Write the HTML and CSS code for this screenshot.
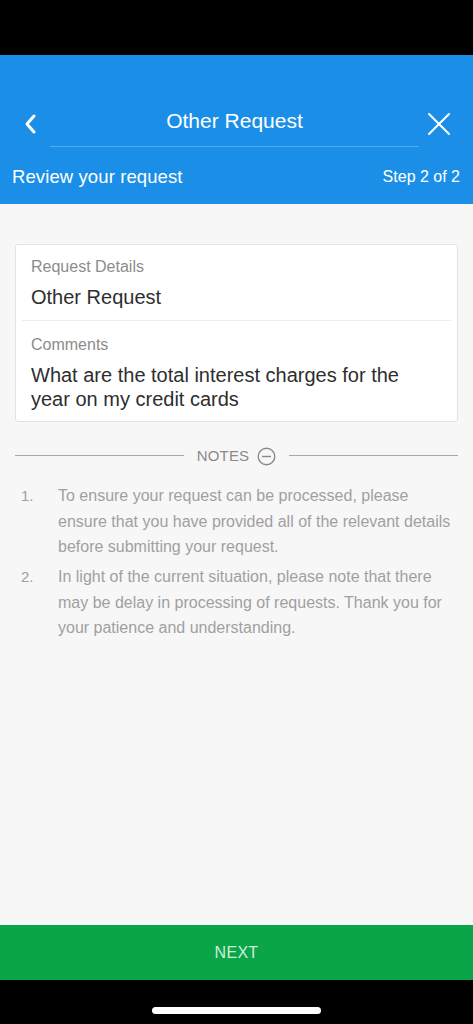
FILE: index.html
```html
<!DOCTYPE html>
<html lang="en">
<head>
    <meta charset="UTF-8">
    <meta name="viewport" content="width=device-width, initial-scale=1.0">
    <title>Other Request</title>
    <link rel="stylesheet" href="styles.css">
</head>
<body>
    <div class="screen">
        <div class="status-bar"></div>

        <!-- Blue header with nav and step info -->
        <header class="header">
            <div class="nav">
                <button class="nav-btn" aria-label="Back">
                    <svg width="16" height="24" viewBox="0 0 16 24"><path d="M12 4 L5 12 L12 20" fill="none" stroke="#fff" stroke-width="3" stroke-linecap="round" stroke-linejoin="round"/></svg>
                </button>
                <h1 class="title">Other Request</h1>
                <button class="nav-btn" aria-label="Close">
                    <svg width="24" height="24" viewBox="0 0 24 24"><path d="M2 2 L22 22 M22 2 L2 22" fill="none" stroke="#fff" stroke-width="2" stroke-linecap="round"/></svg>
                </button>
            </div>
            <div class="step-row">
                <span>Review your request</span>
                <span class="step">Step 2 of 2</span>
            </div>
        </header>

        <main class="content">
            <div class="card">
                <div class="field">
                    <div class="label">Request Details</div>
                    <div class="value">Other Request</div>
                </div>
                <div class="field">
                    <div class="label">Comments</div>
                    <div class="value">What are the total interest charges for the year on my credit cards</div>
                </div>
            </div>

            <div class="notes-head">
                <span class="rule"></span>
                <span class="notes-title">NOTES</span>
                <svg class="notes-icon" width="19" height="19" viewBox="0 0 19 19"><circle cx="9.5" cy="9.5" r="8.3" fill="none" stroke="#8a8a8a" stroke-width="1.4"/><path d="M5 9.5 H14" stroke="#8a8a8a" stroke-width="1.4"/></svg>
                <span class="rule"></span>
            </div>

            <ol class="notes">
                <li><span class="num">1.</span><p>To ensure your request can be processed, please ensure that you have provided all of the relevant details before submitting your request.</p></li>
                <li><span class="num">2.</span><p>In light of the current situation, please note that there may be delay in processing of requests. Thank you for your patience and understanding.</p></li>
            </ol>
        </main>

        <button class="next-btn">NEXT</button>
        <div class="home-bar"><span class="home-indicator"></span></div>
    </div>
</body>
</html>
```

FILE: styles.css
```css
* {
    box-sizing: border-box;
}
body {
    margin: 0;
    padding: 0;
    font-family: 'Liberation Sans', Arial, sans-serif;
    background-color: #000;
}
.screen {
    width: 473px;
    height: 1024px;
    display: flex;
    flex-direction: column;
    background-color: #f8f7f8;
}
.status-bar {
    height: 55px;
    background-color: #000;
}
.header {
    background-color: #1b8fe8;
    color: #fff;
    height: 149px;
    padding-top: 49px;
}
.nav {
    display: flex;
    align-items: center;
    justify-content: space-between;
    padding: 0 22px 0 18px;
    height: 40px;
}
.nav-btn {
    background: none;
    border: none;
    padding: 0;
    width: 24px;
    height: 24px;
    display: flex;
    align-items: center;
    justify-content: center;
}
.title {
    flex: 1;
    margin: 0 8px 0 8px;
    text-align: center;
    font-size: 21px;
    font-weight: normal;
    height: 46px;
    line-height: 40px;
    border-bottom: 1px solid rgba(255, 255, 255, 0.25);
}
.step-row {
    display: flex;
    justify-content: space-between;
    align-items: center;
    padding: 0 13px 0 12px;
    margin-top: 22px;
    font-size: 18.5px;
    letter-spacing: 0.1px;
}
.step {
    font-size: 16px;
    letter-spacing: 0;
}
.content {
    flex: 1;
    padding: 40px 15px 0;
}
.card {
    background: #fff;
    border: 1px solid #e2e2e2;
    border-radius: 3px;
    padding: 0 6px;
}
.field {
    padding: 13px 40px 11px 9px;
}
.field + .field {
    border-top: 1px solid #ececec;
    padding-top: 15px;
    padding-bottom: 10px;
}
.label {
    font-size: 16px;
    line-height: 18px;
    color: #8c8c8c;
    margin-bottom: 9px;
}
.value {
    font-size: 20px;
    color: #2e2e2e;
    line-height: 24px;
}
.notes-head {
    display: flex;
    align-items: center;
    margin-top: 23px;
    color: #8a8a8a;
}
.rule {
    flex: 1;
    height: 1px;
    background-color: #a8a8a8;
}
.notes-title {
    font-size: 15px;
    margin: 0 8px 0 13px;
    letter-spacing: 0.2px;
}
.notes-icon {
    margin-right: 13px;
    margin-top: 2px;
}
.notes {
    list-style: none;
    margin: 17px 0 0;
    padding: 0;
    color: #a0a0a0;
}
.notes li {
    display: flex;
    margin-bottom: 4.5px;
}
.num {
    width: 43px;
    padding-left: 6px;
    font-size: 15px;
    line-height: 25.5px;
}
.notes p {
    flex: 1;
    margin: 0;
    font-size: 16px;
    line-height: 25.5px;
}
.next-btn {
    height: 55px;
    border: none;
    background-color: #0aa548;
    color: #cdeed8;
    font-family: 'Liberation Sans', Arial, sans-serif;
    font-size: 16px;
    letter-spacing: 0.3px;
    width: 100%;
}
.home-bar {
    height: 44px;
    background-color: #000;
    display: flex;
    justify-content: center;
    padding-top: 27px;
}
.home-indicator {
    width: 169px;
    height: 7px;
    border-radius: 4px;
    background-color: #fff;
}
```
